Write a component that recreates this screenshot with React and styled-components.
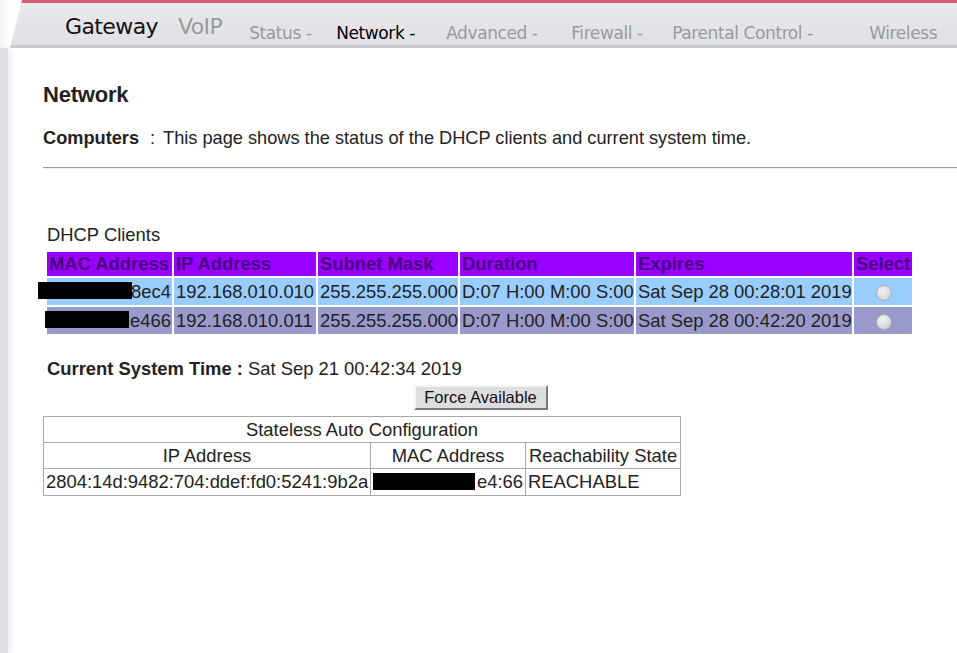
import React from "react";
import styled, { createGlobalStyle } from "styled-components";

const GlobalStyle = createGlobalStyle`
  html, body {
    margin: 0;
    padding: 0;
    background: #fff;
    font-family: "Liberation Sans", Arial, sans-serif;
  }
`;

const menu = [
  { label: "Status -", width: 87 },
  { label: "Network -", width: 110, active: true },
  { label: "Advanced -", width: 125 },
  { label: "Firewall -", width: 101 },
  { label: "Parental Control -", width: 197 },
  { label: "Wireless" },
];

const clients = [
  {
    mac: "8ec4",
    hide: { left: -9, width: 94 },
    ip: "192.168.010.010",
    mask: "255.255.255.000",
    duration: "D:07 H:00 M:00 S:00",
    expires: "Sat Sep 28 00:28:01 2019",
  },
  {
    mac: "e466",
    hide: { left: -2, width: 84 },
    ip: "192.168.010.011",
    mask: "255.255.255.000",
    duration: "D:07 H:00 M:00 S:00",
    expires: "Sat Sep 28 00:42:20 2019",
  },
];

const columns = [
  { label: "MAC Address", width: 125 },
  { label: "IP Address", width: 142 },
  { label: "Subnet Mask", width: 140 },
  { label: "Duration", width: 174 },
  { label: "Expires", width: 216 },
  { label: "Select", width: 58 },
];

function App() {
  return (
    <Page>
      <GlobalStyle />
      <Header>
        <NavBar>
          <Brand>Gateway</Brand>
          <Brand $muted>VoIP</Brand>
          <Menu>
            {menu.map(({ label, width, active }) => (
              <MenuItem key={label} $width={width} $active={active}>
                {label}
              </MenuItem>
            ))}
          </Menu>
        </NavBar>
      </Header>
      <Body>
        <LeftStrip />
        <Content>
          <Title>Network</Title>
          <Intro>
            <strong>Computers</strong>
            <Sep>:</Sep>
            This page shows the status of the DHCP clients and current system
            time.
          </Intro>
          <Rule />
          <Clients>
            <Caption>DHCP Clients</Caption>
            <ClientTable>
              <thead>
                <tr>
                  {columns.map(({ label, width }) => (
                    <HeadCell key={label} $width={width}>
                      {label}
                    </HeadCell>
                  ))}
                </tr>
              </thead>
              <tbody>
                {clients.map((c, index) => (
                  <ClientRow key={c.mac} $alt={index % 2 === 1}>
                    <MacCell>
                      <Redact
                        style={{ left: c.hide.left, width: c.hide.width }}
                      />
                      {c.mac}
                    </MacCell>
                    <td>{c.ip}</td>
                    <td>{c.mask}</td>
                    <td>{c.duration}</td>
                    <td>{c.expires}</td>
                    <SelectCell>
                      <Radio />
                    </SelectCell>
                  </ClientRow>
                ))}
              </tbody>
            </ClientTable>
            <SystemTime>
              <strong>Current System Time :</strong> Sat Sep 21 00:42:34 2019
            </SystemTime>
            <ButtonRow>
              <ForceButton>Force Available</ForceButton>
            </ButtonRow>
          </Clients>
          <SlaacTable>
            <colgroup>
              <Col $width={327} />
              <Col $width={155} />
              <Col $width={155} />
            </colgroup>
            <tbody>
              <tr>
                <SlaacHead colSpan={3}>Stateless Auto Configuration</SlaacHead>
              </tr>
              <tr>
                <SlaacHead>IP Address</SlaacHead>
                <SlaacHead>MAC Address</SlaacHead>
                <SlaacHead>Reachability State</SlaacHead>
              </tr>
              <tr>
                <SlaacCell>2804:14d:9482:704:ddef:fd0:5241:9b2a</SlaacCell>
                <SlaacCell $right>
                  <Redact style={{ left: 2, width: 102, top: 4 }} />
                  e4:66
                </SlaacCell>
                <SlaacCell>REACHABLE</SlaacCell>
              </tr>
            </tbody>
          </SlaacTable>
        </Content>
      </Body>
    </Page>
  );
}

const Page = styled.div`
  min-height: 653px;
  display: flex;
  flex-direction: column;
`;

const Header = styled.header`
  height: 48px;
  display: flex;
  background: linear-gradient(90deg, #f2f2f4 0, #fff 10px);
`;

const NavBar = styled.nav`
  flex: 1;
  margin-left: 10px;
  box-sizing: border-box;
  height: 48px;
  display: flex;
  align-items: flex-start;
  padding-left: 55px;
  background: linear-gradient(#e9e9ed, #e1e1e5);
  border-top: 3px solid #d35d73;
  border-bottom: 3px solid #cacace;
  clip-path: polygon(12px 0, 100% 0, 100% 100%, 0 100%);
  font-family: "DejaVu Sans", Verdana, sans-serif;
`;

const Brand = styled.span`
  font-size: 22px;
  line-height: 26px;
  letter-spacing: -0.6px;
  padding-top: 11px;
  margin-right: ${(p) => (p.$muted ? "25px" : "20px")};
  color: ${(p) => (p.$muted ? "#9a9a9a" : "#111")};
`;

const Menu = styled.div`
  display: flex;
  padding-top: 20px;
  padding-left: 2px;
`;

const MenuItem = styled.span`
  flex: none;
  width: ${(p) => (p.$width ? `${p.$width}px` : "auto")};
  font-size: 17px;
  line-height: 20px;
  letter-spacing: -0.4px;
  white-space: nowrap;
  color: ${(p) => (p.$active ? "#000" : "#9a9a9a")};
`;

const Body = styled.div`
  flex: 1;
  display: flex;
`;

const LeftStrip = styled.div`
  flex: none;
  width: 8px;
  background: #dedee2;
  box-shadow: 3px 0 6px rgba(0, 0, 0, 0.08);
`;

const Content = styled.main`
  flex: 1;
  padding: 34px 0 0 35px;
  color: #222;
  font-size: 18.4px;
`;

const Title = styled.h1`
  margin: 0;
  font-size: 22px;
  line-height: 26px;
  font-weight: bold;
  letter-spacing: -0.2px;
  color: #222;
`;

const Intro = styled.p`
  margin: 19px 0 0;
  line-height: 22px;
  font-size: 18.2px;
  color: #222;
`;

const Sep = styled.span`
  margin: 0 8px 0 11px;
`;

const Rule = styled.hr`
  margin: 18px 0 0;
  height: 0;
  border: 0;
  border-top: 1px solid #999;
  border-bottom: 1px solid #ececec;
`;

const Clients = styled.section`
  margin-top: 55px;
  padding-left: 4px;
  width: 867px;
`;

const Caption = styled.div`
  line-height: 22px;
  color: #222;
`;

const ClientTable = styled.table`
  margin: 4px 0 0 -2px;
  width: 869px;
  table-layout: fixed;
  border-collapse: separate;
  border-spacing: 2px;
  font-size: 18.4px;
  td {
    height: 27px;
    padding: 0 1px 0 2px;
    box-sizing: border-box;
    white-space: nowrap;
  }
`;

const HeadCell = styled.th`
  width: ${(p) => p.$width}px;
  height: 24px;
  box-sizing: border-box;
  padding: 0 1px 0 2px;
  text-align: left;
  background: #9900ff;
  color: #4b0082;
  font-weight: bold;
  white-space: nowrap;
  overflow: hidden;
`;

const ClientRow = styled.tr`
  background: ${(p) => (p.$alt ? "#9999cc" : "#99ccff")};
  color: #222;
`;

const MacCell = styled.td`
  position: relative;
  text-align: right;
`;

const Redact = styled.span`
  position: absolute;
  top: 4px;
  height: 17px;
  background: #000;
`;

const SelectCell = styled.td`
  text-align: center;
`;

const Radio = styled.span`
  display: inline-block;
  vertical-align: middle;
  width: 14px;
  height: 14px;
  border-radius: 50%;
  border: 1px solid #adadad;
  background: radial-gradient(circle at 40% 35%, #f4f4f4, #c6c6c6);
`;

const SystemTime = styled.div`
  margin-top: 22px;
  line-height: 22px;
  color: #222;
`;

const ButtonRow = styled.div`
  margin-top: 5px;
  display: flex;
  justify-content: center;
`;

const ForceButton = styled.button`
  width: 134px;
  height: 25px;
  padding: 0;
  font-family: "Liberation Sans", Arial, sans-serif;
  font-size: 16.5px;
  color: #111;
  background: #dedede;
  border: 2px solid;
  border-color: #f4f4f4 #7a7a7a #7a7a7a #f4f4f4;
`;

const SlaacTable = styled.table`
  margin-top: 6px;
  width: 637px;
  table-layout: fixed;
  border-collapse: collapse;
  border: 1px solid #8c8c8c;
  font-size: 18.4px;
  color: #222;
`;

const Col = styled.col`
  width: ${(p) => p.$width}px;
`;

const SlaacHead = styled.td`
  height: 25px;
  padding: 0;
  text-align: center;
  border: 1px solid #a8a8a8;
  white-space: nowrap;
`;

const SlaacCell = styled.td`
  position: relative;
  height: 26px;
  padding: 0 2px;
  text-align: ${(p) => (p.$right ? "right" : "left")};
  border: 1px solid #a8a8a8;
  white-space: nowrap;
`;

export default App;
